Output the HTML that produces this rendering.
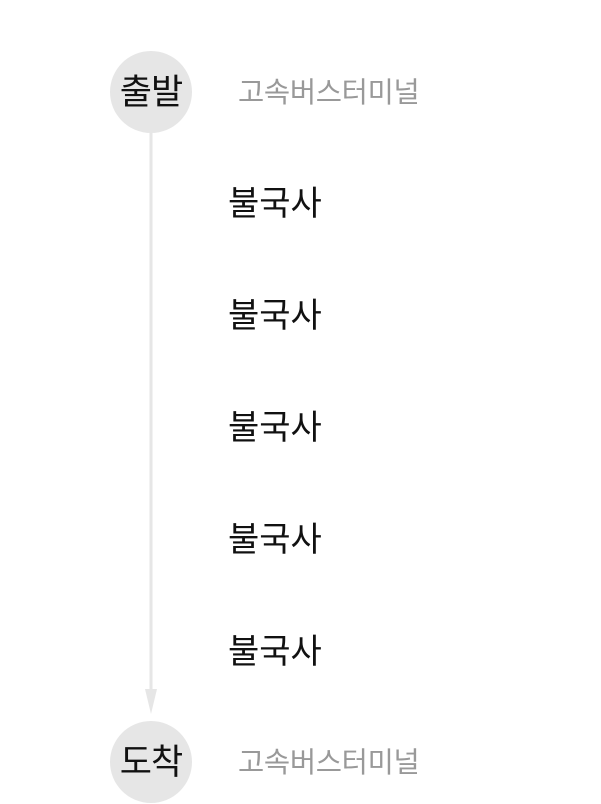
<!DOCTYPE html>
<html><head><meta charset="utf-8"><style>
body{margin:0;width:601px;height:804px;background:#fff;position:relative;overflow:hidden;font-family:"Liberation Sans","Noto Sans CJK KR",sans-serif}
.c{position:absolute;left:110px;width:82px;height:82px;border-radius:50%;background:#e6e6e6;font-size:35px;line-height:83px;text-align:center;color:#111;letter-spacing:-1px}
.g{position:absolute;left:238px;font-size:28.5px;color:#999;line-height:40px;letter-spacing:-0.3px}
.s{position:absolute;left:228px;font-size:34px;color:#111;line-height:40px}
</style></head><body>
<svg style="position:absolute;left:0;top:0" width="601" height="804">
<line x1="151" y1="133" x2="151" y2="692" stroke="#e6e6e6" stroke-width="3"/>
<polygon points="145,689 157,689 151,714" fill="#e6e6e6"/>
</svg>
<div class="c" style="top:51px">출발</div>
<div class="g" style="top:73px">고속버스터미널</div>
<div class="s" style="top:184px">불국사</div>
<div class="s" style="top:296px">불국사</div>
<div class="s" style="top:408px">불국사</div>
<div class="s" style="top:520px">불국사</div>
<div class="s" style="top:632px">불국사</div>
<div class="c" style="top:721px">도착</div>
<div class="g" style="top:743px">고속버스터미널</div>
</body></html>
